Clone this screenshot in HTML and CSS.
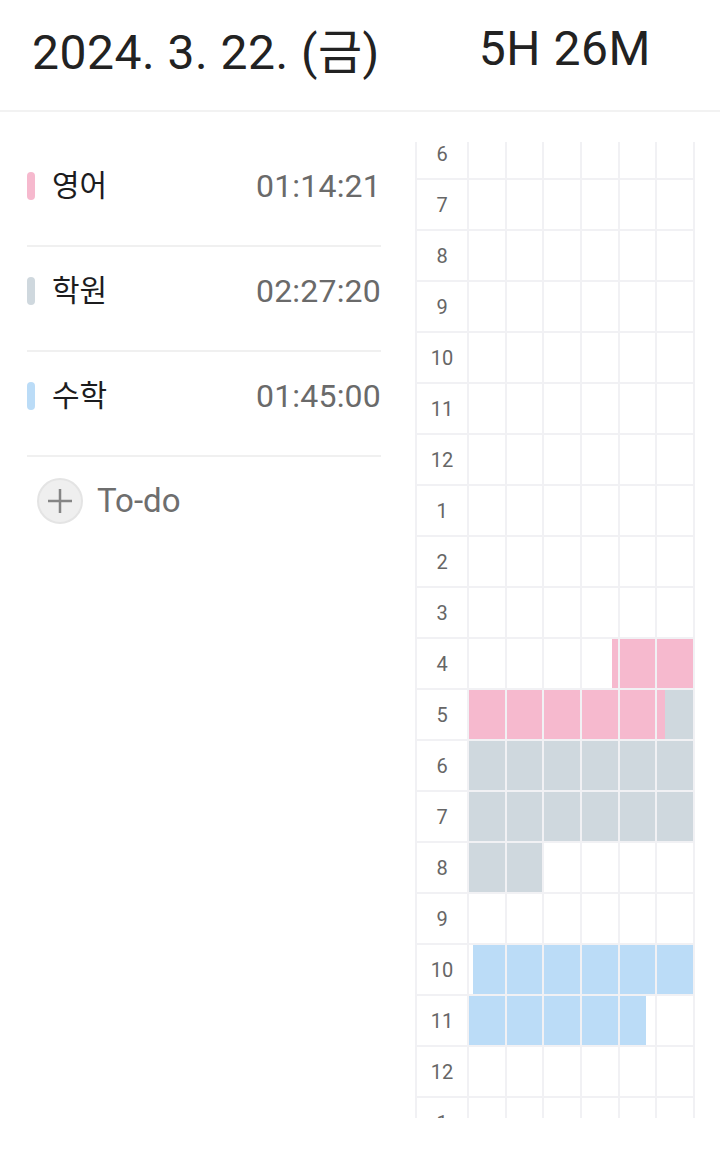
FILE: index.html
```html
<!DOCTYPE html>
<html lang="ko">
<head>
<meta charset="utf-8">
<title>Study timeline</title>
<link rel="stylesheet" href="styles.css">
</head>
<body>
<header class="top">
  <div class="date">2024. 3. 22. (금)</div>
  <div class="total">5H 26M</div>
</header>
<main class="main">
  <section class="subjects">
    <div class="subject">
      <span class="bar pink"></span><span class="name">영어</span><span class="time">01:14:21</span>
    </div>
    <div class="subject">
      <span class="bar gray"></span><span class="name">학원</span><span class="time">02:27:20</span>
    </div>
    <div class="subject">
      <span class="bar blue"></span><span class="name">수학</span><span class="time">01:45:00</span>
    </div>
    <div class="todo">
      <span class="plus-btn">
        <svg width="26" height="26" viewBox="0 0 26 26"><path d="M13 1V25M1 13H25" stroke="#858585" stroke-width="2.5" fill="none"/></svg>
      </span>
      <span class="todo-label">To-do</span>
    </div>
  </section>
  <section class="timeline">
    <div class="grid">
      <div class="hour">6</div><div class="cell"></div><div class="cell"></div><div class="cell"></div><div class="cell"></div><div class="cell"></div><div class="cell"></div>
      <div class="hour">7</div><div class="cell"></div><div class="cell"></div><div class="cell"></div><div class="cell"></div><div class="cell"></div><div class="cell"></div>
      <div class="hour">8</div><div class="cell"></div><div class="cell"></div><div class="cell"></div><div class="cell"></div><div class="cell"></div><div class="cell"></div>
      <div class="hour">9</div><div class="cell"></div><div class="cell"></div><div class="cell"></div><div class="cell"></div><div class="cell"></div><div class="cell"></div>
      <div class="hour">10</div><div class="cell"></div><div class="cell"></div><div class="cell"></div><div class="cell"></div><div class="cell"></div><div class="cell"></div>
      <div class="hour">11</div><div class="cell"></div><div class="cell"></div><div class="cell"></div><div class="cell"></div><div class="cell"></div><div class="cell"></div>
      <div class="hour">12</div><div class="cell"></div><div class="cell"></div><div class="cell"></div><div class="cell"></div><div class="cell"></div><div class="cell"></div>
      <div class="hour">1</div><div class="cell"></div><div class="cell"></div><div class="cell"></div><div class="cell"></div><div class="cell"></div><div class="cell"></div>
      <div class="hour">2</div><div class="cell"></div><div class="cell"></div><div class="cell"></div><div class="cell"></div><div class="cell"></div><div class="cell"></div>
      <div class="hour">3</div><div class="cell"></div><div class="cell"></div><div class="cell"></div><div class="cell"></div><div class="cell"></div><div class="cell"></div>
      <div class="hour">4</div><div class="cell"></div><div class="cell"></div><div class="cell"></div>
        <div class="cell"><span class="seg" style="width:84%"></span><span class="seg pink"></span></div>
        <div class="cell"><span class="seg pink"></span></div><div class="cell"><span class="seg pink"></span></div>
      <div class="hour">5</div>
        <div class="cell"><span class="seg pink"></span></div><div class="cell"><span class="seg pink"></span></div><div class="cell"><span class="seg pink"></span></div><div class="cell"><span class="seg pink"></span></div><div class="cell"><span class="seg pink"></span></div>
        <div class="cell"><span class="seg pink" style="width:22%"></span><span class="seg gray"></span></div>
      <div class="hour">6</div>
        <div class="cell"><span class="seg gray"></span></div><div class="cell"><span class="seg gray"></span></div><div class="cell"><span class="seg gray"></span></div><div class="cell"><span class="seg gray"></span></div><div class="cell"><span class="seg gray"></span></div><div class="cell"><span class="seg gray"></span></div>
      <div class="hour">7</div>
        <div class="cell"><span class="seg gray"></span></div><div class="cell"><span class="seg gray"></span></div><div class="cell"><span class="seg gray"></span></div><div class="cell"><span class="seg gray"></span></div><div class="cell"><span class="seg gray"></span></div><div class="cell"><span class="seg gray"></span></div>
      <div class="hour">8</div>
        <div class="cell"><span class="seg gray"></span></div><div class="cell"><span class="seg gray"></span></div><div class="cell"></div><div class="cell"></div><div class="cell"></div><div class="cell"></div>
      <div class="hour">9</div><div class="cell"></div><div class="cell"></div><div class="cell"></div><div class="cell"></div><div class="cell"></div><div class="cell"></div>
      <div class="hour">10</div>
        <div class="cell"><span class="seg" style="width:11%"></span><span class="seg blue"></span></div>
        <div class="cell"><span class="seg blue"></span></div><div class="cell"><span class="seg blue"></span></div><div class="cell"><span class="seg blue"></span></div><div class="cell"><span class="seg blue"></span></div><div class="cell"><span class="seg blue"></span></div>
      <div class="hour">11</div>
        <div class="cell"><span class="seg blue"></span></div><div class="cell"><span class="seg blue"></span></div><div class="cell"><span class="seg blue"></span></div><div class="cell"><span class="seg blue"></span></div>
        <div class="cell"><span class="seg blue" style="width:73%"></span></div>
        <div class="cell"></div>
      <div class="hour">12</div><div class="cell"></div><div class="cell"></div><div class="cell"></div><div class="cell"></div><div class="cell"></div><div class="cell"></div>
      <div class="hour">1</div><div class="cell"></div><div class="cell"></div><div class="cell"></div><div class="cell"></div><div class="cell"></div><div class="cell"></div>
    </div>
  </section>
</main>
</body>
</html>
```

FILE: styles.css
```css
* { box-sizing: border-box; }

body {
  margin: 0;
  background: #ffffff;
  font-family: Roboto, "Noto Sans CJK KR", sans-serif;
  color: #1c1c1e;
}

.top {
  height: 112px;
  display: flex;
  align-items: center;
  padding: 0 0 14px 32px;
  border-bottom: 2px solid #f2f2f2;
  font-size: 48px;
  font-weight: 400;
  letter-spacing: 0.5px;
  color: #222222;
}

.total {
  margin-left: 99px;
  letter-spacing: 0.5px;
}

.main {
  display: flex;
  align-items: flex-start;
  padding: 30px 0 0 27px;
}

.subjects {
  width: 354px;
  flex: none;
}

.subject {
  display: flex;
  align-items: center;
  height: 105px;
  padding: 24px 0 39px;
  border-bottom: 2px solid #f0f0f0;
}

.bar {
  width: 8px;
  height: 28px;
  border-radius: 4px;
  margin-right: 17px;
  flex: none;
}

.name {
  font-size: 30px;
  line-height: 40px;
  color: #1c1c1e;
}

.time {
  margin-left: auto;
  font-size: 32px;
  line-height: 40px;
  letter-spacing: 0.2px;
  color: #6a6a6a;
}

.todo {
  display: flex;
  align-items: center;
  padding: 21px 0 0 10px;
}

.plus-btn {
  width: 46px;
  height: 46px;
  border-radius: 50%;
  background: #efefef;
  border: 2px solid #e4e4e4;
  display: flex;
  align-items: center;
  justify-content: center;
  margin-right: 14px;
}

.todo-label {
  font-size: 33px;
  line-height: 40px;
  color: #6e6e6e;
}

.timeline {
  margin-left: 34px;
  width: 280px;
  height: 976px;
  overflow: hidden;
  flex: none;
}

.grid {
  margin-top: -13px;
  display: grid;
  grid-template-columns: 50px repeat(6, 1fr);
  grid-auto-rows: 49px;
  gap: 2px;
  padding: 0 2px;
  background: #f1f1f4;
}

.hour {
  background: #ffffff;
  display: flex;
  align-items: center;
  justify-content: center;
  font-size: 20px;
  color: #666666;
}

.cell {
  background: #ffffff;
  display: flex;
}

.seg {
  height: 100%;
  flex: none;
}

.seg.pink, .seg.gray, .seg.blue { flex: 1 1 auto; }
.seg.pink[style], .seg.blue[style] { flex: none; }

.pink { background: #f6b9ce; }
.gray { background: #cfd8de; }
.blue { background: #bbdcf7; }
```
